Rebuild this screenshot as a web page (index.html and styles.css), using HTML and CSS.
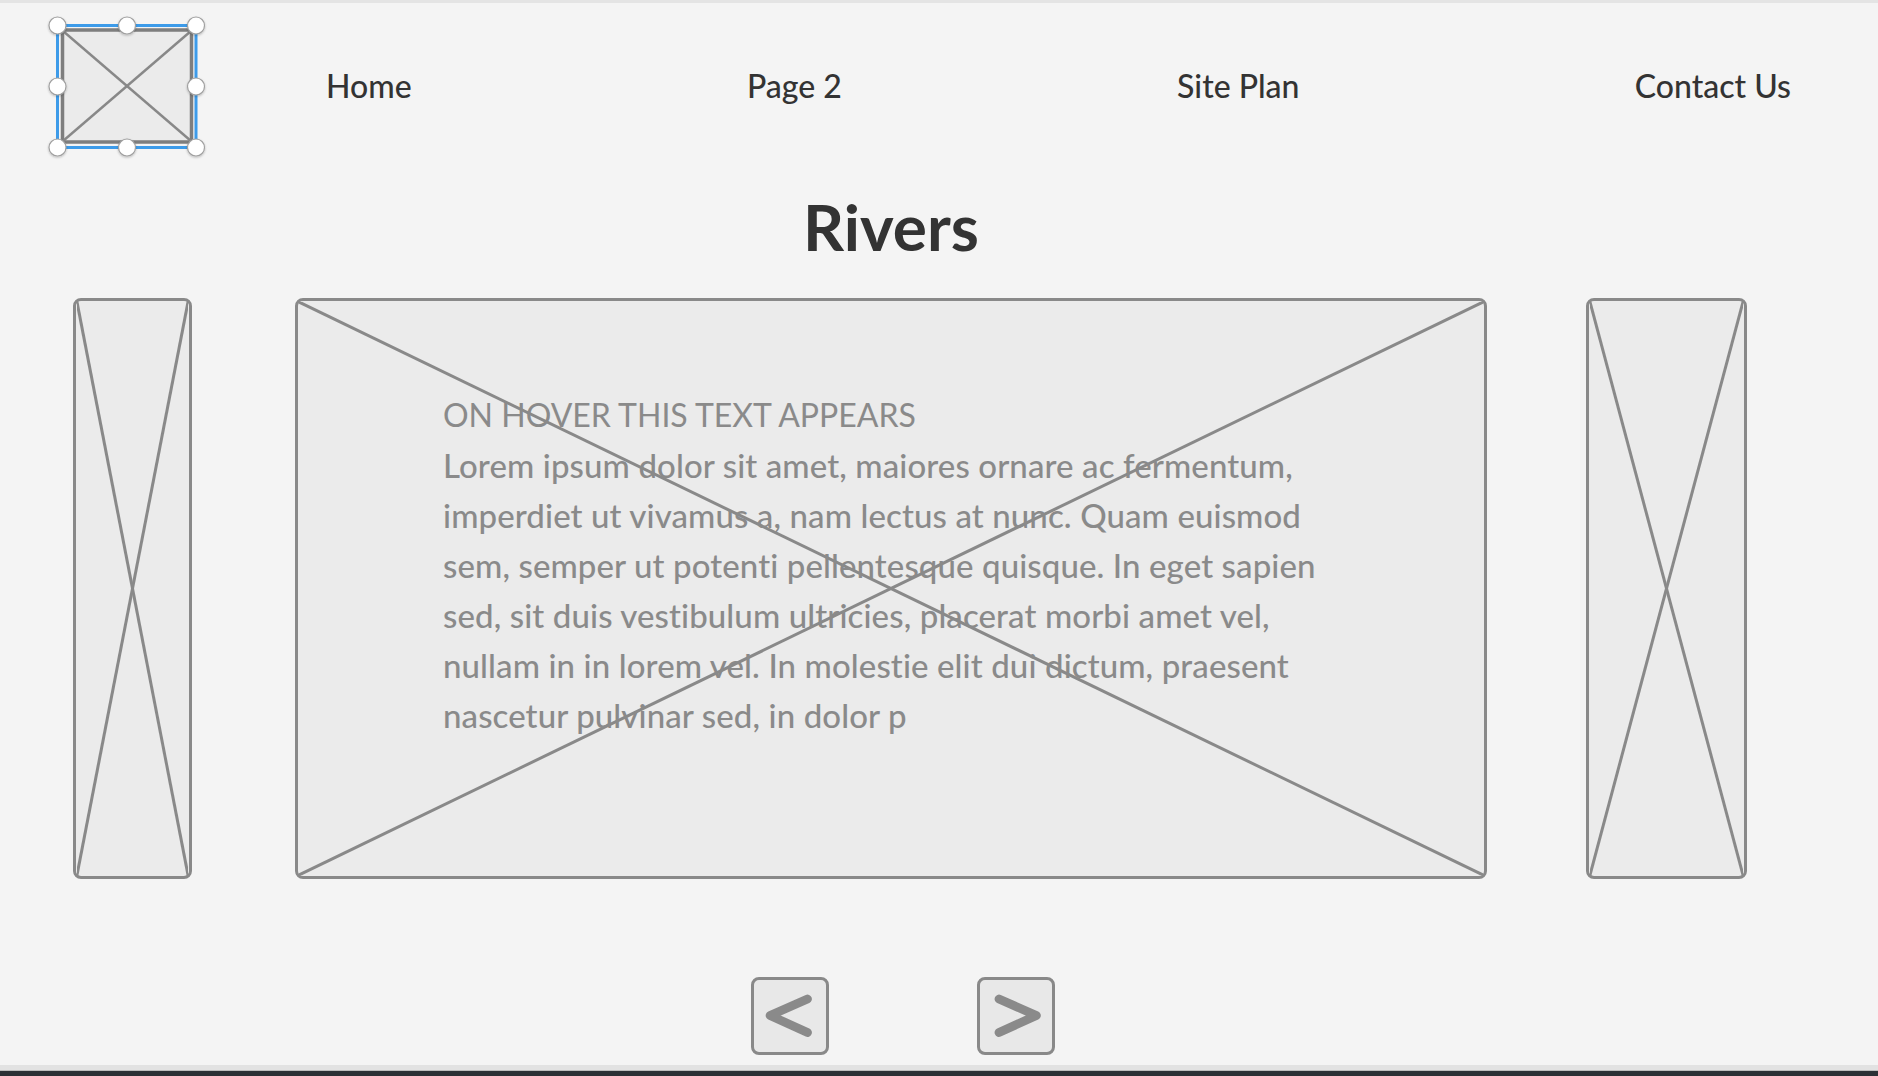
FILE: index.html
```html
<!DOCTYPE html>
<html lang="en">
<head>
<meta charset="utf-8">
<title>Rivers</title>
<link rel="stylesheet" href="styles.css">
</head>
<body>
<div class="page">
  <header class="header">
    <div class="logo">
      <svg class="logo-svg" width="139" height="122" viewBox="57 25 139 122">
        <defs>
          <filter id="hs" x="-50%" y="-50%" width="200%" height="200%">
            <feDropShadow dx="0" dy="1" stdDeviation="0.8" flood-color="#000" flood-opacity="0.25"/>
          </filter>
        </defs>
        <rect x="62.5" y="30" width="129" height="112" rx="3" fill="#ebebeb" stroke="#7e7e7e" stroke-width="3.5"/>
        <line x1="63" y1="31" x2="191" y2="141" stroke="#888888" stroke-width="2.4"/>
        <line x1="191" y1="31" x2="63" y2="141" stroke="#888888" stroke-width="2.4"/>
        <rect x="57.5" y="25.5" width="138.5" height="122" fill="none" stroke="#3d9be9" stroke-width="3"/>
        <g fill="#ffffff" stroke="#a0a0a0" stroke-width="1.2" filter="url(#hs)">
          <circle cx="57.5" cy="25.5" r="8.5"/>
          <circle cx="127" cy="25.5" r="8.5"/>
          <circle cx="196" cy="25.5" r="8.5"/>
          <circle cx="57.5" cy="86.5" r="8.5"/>
          <circle cx="196" cy="86.5" r="8.5"/>
          <circle cx="57.5" cy="147.5" r="8.5"/>
          <circle cx="127" cy="147.5" r="8.5"/>
          <circle cx="196" cy="147.5" r="8.5"/>
        </g>
      </svg>
    </div>
    <nav class="nav">
      <a class="nav-link" href="#">Home</a>
      <a class="nav-link" href="#">Page 2</a>
      <a class="nav-link" href="#">Site Plan</a>
      <a class="nav-link" href="#">Contact Us</a>
    </nav>
  </header>

  <main class="stage">
    <h1 class="title main-col">Rivers</h1>
    <div class="gallery">
      <div class="ph ph-left">
        <svg class="ph-x" viewBox="0 0 100 100" preserveAspectRatio="none">
          <line x1="0" y1="0" x2="100" y2="100" vector-effect="non-scaling-stroke"/>
          <line x1="100" y1="0" x2="0" y2="100" vector-effect="non-scaling-stroke"/>
        </svg>
      </div>
      <div class="ph ph-main">
        <svg class="ph-x" viewBox="0 0 100 100" preserveAspectRatio="none">
          <line x1="0" y1="0" x2="100" y2="100" vector-effect="non-scaling-stroke"/>
          <line x1="100" y1="0" x2="0" y2="100" vector-effect="non-scaling-stroke"/>
        </svg>
        <div class="hover-text">
          <p class="hover-head">ON HOVER THIS TEXT APPEARS</p>
          <p class="hover-body">Lorem ipsum dolor sit amet, maiores ornare ac fermentum,<br>imperdiet ut vivamus a, nam lectus at nunc. Quam euismod<br>sem, semper ut potenti pellentesque quisque. In eget sapien<br>sed, sit duis vestibulum ultricies, placerat morbi amet vel,<br>nullam in in lorem vel. In molestie elit dui dictum, praesent<br>nascetur pulvinar sed, in dolor p</p>
        </div>
      </div>
      <div class="ph ph-right">
        <svg class="ph-x" viewBox="0 0 100 100" preserveAspectRatio="none">
          <line x1="0" y1="0" x2="100" y2="100" vector-effect="non-scaling-stroke"/>
          <line x1="100" y1="0" x2="0" y2="100" vector-effect="non-scaling-stroke"/>
        </svg>
      </div>
    </div>
    <div class="pager main-col">
      <button class="pager-btn" type="button" aria-label="Previous">
        <svg width="74" height="74" viewBox="0 0 74 74"><polyline points="55,19.5 16.5,36.5 55,54" fill="none" stroke="#8a8a8a" stroke-width="9" stroke-linecap="round" stroke-linejoin="round"/></svg>
      </button>
      <button class="pager-btn" type="button" aria-label="Next">
        <svg width="74" height="74" viewBox="0 0 74 74"><polyline points="19.5,19.5 58,36.5 19.5,54" fill="none" stroke="#8a8a8a" stroke-width="9" stroke-linecap="round" stroke-linejoin="round"/></svg>
      </button>
    </div>
  </main>

  <footer class="footer"></footer>
</div>
</body>
</html>
```

FILE: styles.css
```css
html, body {
  margin: 0;
  padding: 0;
}

body {
  background: #f4f4f4;
  font-family: "Lato", "Open Sans", sans-serif;
  color: #333333;
  overflow: hidden;
}

.page {
  width: 1878px;
  height: 1076px;
  display: flex;
  flex-direction: column;
  border-top: 3px solid #e4e4e4;
  box-sizing: border-box;
}

.header {
  display: flex;
  align-items: center;
  padding: 22px 87px 0 57px;
}

.logo {
  width: 139px;
  height: 122px;
  flex: none;
}

.logo-svg {
  display: block;
  overflow: visible;
}

.nav {
  flex: 1;
  display: flex;
  justify-content: space-between;
  align-items: center;
  margin-left: 130px;
}

.nav-link {
  font-size: 32px;
  font-weight: 500;
  color: #333333;
  text-decoration: none;
  line-height: 1.2;
}

.stage {
  display: flex;
  flex-direction: column;
  padding-left: 73px;
}

.main-col {
  margin-left: 222px;
  width: 1192px;
}

.title {
  margin-top: 44px;
  margin-bottom: 35px;
  font-size: 64px;
  line-height: 72px;
  font-weight: 700;
  text-align: center;
  color: #333333;
}

.gallery {
  display: flex;
  align-items: stretch;
  height: 581px;
}

.ph {
  position: relative;
  box-sizing: border-box;
  border: 3px solid #898989;
  border-radius: 8px;
  background: #ebebeb;
  flex: none;
}

.ph-x {
  position: absolute;
  inset: 1px;
  width: calc(100% - 2px);
  height: calc(100% - 2px);
}

.ph-x line {
  stroke: #898989;
  stroke-width: 3;
}

.ph-left {
  width: 119px;
}

.ph-main {
  width: 1192px;
  margin: 0 99px 0 103px;
}

.ph-right {
  width: 161px;
}

.hover-text {
  position: relative;
  padding: 89px 0 0 145px;
  color: #8a8a8a;
  line-height: 50px;
}

.hover-head {
  margin: 0;
  font-size: 32px;
  font-weight: 400;
}

.hover-body {
  margin: 0;
  font-size: 33px;
  font-weight: 500;
  letter-spacing: 0.1px;
}

.pager {
  display: flex;
  justify-content: center;
  gap: 148px;
  padding-left: 24px;
  box-sizing: border-box;
  margin-top: 98px;
}

.pager-btn {
  width: 78px;
  height: 78px;
  padding: 0;
  box-sizing: border-box;
  border: 3px solid #898989;
  border-radius: 8px;
  background: #e8e8e8;
  display: flex;
  align-items: center;
  justify-content: center;
  cursor: pointer;
}

.pager-btn svg {
  display: block;
}

.footer {
  margin-top: auto;
  height: 11px;
  background: linear-gradient(to bottom, #e2e2e2 0, #e2e2e2 5px, #bdbdbd 5px, #bdbdbd 6px, #2b3035 6px);
}
```
